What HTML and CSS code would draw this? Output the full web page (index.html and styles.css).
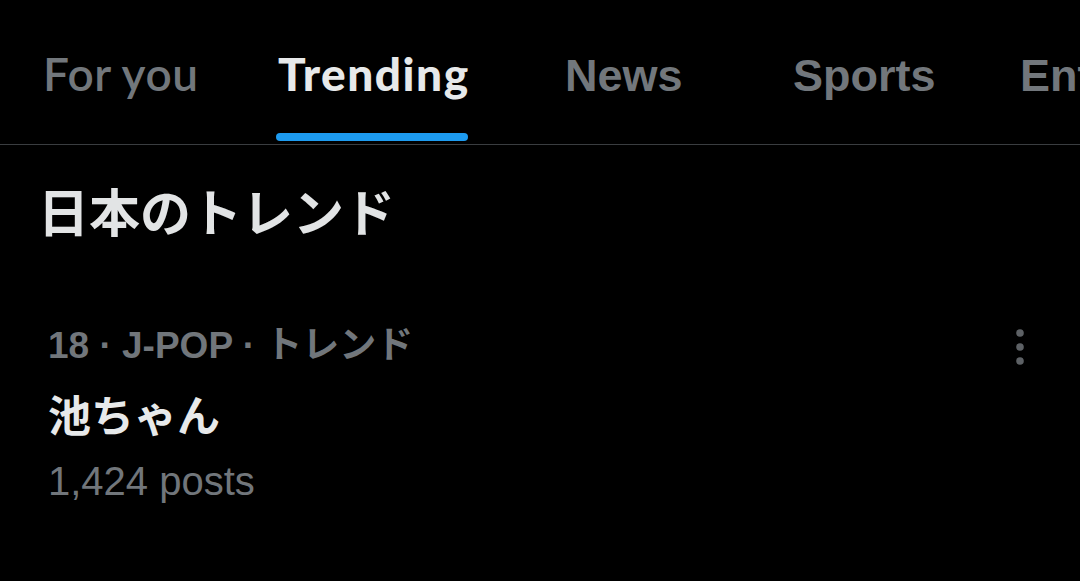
FILE: index.html
```html
<!DOCTYPE html>
<html lang="ja">
<head>
<meta charset="utf-8">
<title>Trending</title>
<link rel="stylesheet" href="styles.css">
</head>
<body>
<nav class="tabs">
  <div class="tab tab-foryou"><span class="label lato">For you</span></div>
  <div class="tab tab-trending active"><span class="label lato">Trending</span><span class="indicator"></span></div>
  <div class="tab tab-news"><span class="label sans">News</span></div>
  <div class="tab tab-sports"><span class="label sans">Sports</span></div>
  <div class="tab tab-ent"><span class="label sans">Entertainment</span></div>
</nav>
<main class="content">
  <h1 class="section-title">日本のトレンド</h1>
  <article class="trend">
    <div class="trend-body">
      <div class="trend-meta">18 · J-POP · トレンド</div>
      <div class="trend-name">池ちゃん</div>
      <div class="trend-count">1,424 posts</div>
    </div>
    <button class="more" aria-label="More">
      <svg width="10" height="38" viewBox="0 0 10 38"><circle cx="5" cy="5" r="3.8"/><circle cx="5" cy="19" r="3.8"/><circle cx="5" cy="33" r="3.8"/></svg>
    </button>
  </article>
</main>
</body>
</html>
```
FILE: styles.css
```css
html, body {
  margin: 0;
  padding: 0;
  background: #000;
  overflow: hidden;
}
body {
  width: 1080px;
  height: 581px;
  font-family: "Liberation Sans", "Noto Sans CJK JP", sans-serif;
  color: #e7e9ea;
}
.tabs {
  display: flex;
  align-items: baseline;
  padding: 46px 0 3px 43px;
  border-bottom: 1px solid #3a3d40;
  white-space: nowrap;
  overflow: hidden;
}
.tab {
  flex: none;
  display: flex;
  flex-direction: column;
  align-items: flex-start;
}
.tab-foryou { width: 235px; }
.tab-trending { width: 287px; }
.tab-news { width: 228px; }
.tab-sports { width: 227px; }
.label {
  line-height: 56px;
  color: #72777c;
}
.lato {
  font-family: "Lato", sans-serif;
  font-size: 46px;
  font-weight: 600;
  letter-spacing: 0.5px;
}
.sans {
  font-family: "Liberation Sans", sans-serif;
  font-size: 45px;
  font-weight: 700;
}
.active .label {
  color: #e7e9ea;
  font-weight: 900;
  letter-spacing: 1.5px;
}
.indicator {
  display: block;
  width: 192px;
  height: 8px;
  margin: 31px 0 0 -2px;
  border-radius: 4px;
  background: #1d9bf0;
}
.content {
  padding: 0 0 0 38px;
}
.section-title {
  margin: 0;
  padding-top: 35px;
  font-family: "Noto Sans CJK JP", sans-serif;
  font-size: 51px;
  font-weight: 700;
  line-height: 60px;
  color: #e2e4e5;
}
.trend {
  display: flex;
  align-items: flex-start;
  justify-content: space-between;
  padding: 84px 55px 0 10px;
}
.trend-meta {
  font-size: 37px;
  font-weight: 700;
  line-height: 44px;
  color: #71767b;
}
.trend-name {
  margin-top: 24px;
  font-family: "Noto Sans CJK JP", sans-serif;
  font-size: 43px;
  font-weight: 700;
  line-height: 43px;
  color: #e7e9ea;
}
.trend-count {
  margin-top: 23px;
  font-size: 40px;
  line-height: 46px;
  color: #71767b;
}
.more {
  margin: 4px 0 0 0;
  padding: 0;
  border: 0;
  background: none;
  line-height: 0;
}
.more svg {
  fill: #5d6165;
}
```
